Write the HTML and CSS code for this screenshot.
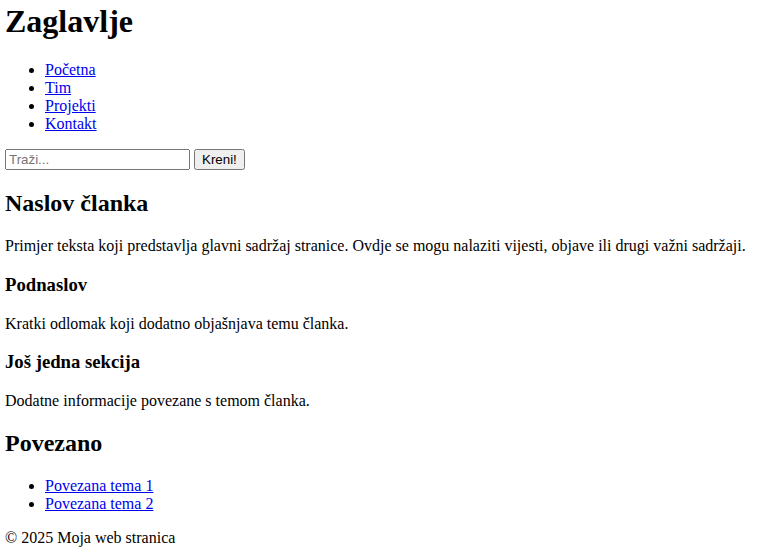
FILE: index.html
```html
<!DOCTYPE html>
<html lang="hr">
<head>
<meta charset="utf-8">
<title>Moja web stranica</title>
<link rel="stylesheet" href="styles.css">
</head>
<body>
<header class="site-header">
  <h1 class="site-title">Zaglavlje</h1>
  <nav class="site-nav">
    <ul>
      <li><a href="#">Početna</a></li>
      <li><a href="#">Tim</a></li>
      <li><a href="#">Projekti</a></li>
      <li><a href="#">Kontakt</a></li>
    </ul>
  </nav>
  <form class="search">
    <input type="text" placeholder="Traži..."> <button type="submit">Kreni!</button>
  </form>
</header>
<main>
  <article>
    <h2>Naslov članka</h2>
    <p>Primjer teksta koji predstavlja glavni sadržaj stranice. Ovdje se mogu nalaziti vijesti, objave ili drugi važni sadržaji.</p>
    <section>
      <h3>Podnaslov</h3>
      <p>Kratki odlomak koji dodatno objašnjava temu članka.</p>
    </section>
    <section>
      <h3>Još jedna sekcija</h3>
      <p>Dodatne informacije povezane s temom članka.</p>
    </section>
  </article>
  <aside>
    <h2>Povezano</h2>
    <ul>
      <li><a href="#">Povezana tema 1</a></li>
      <li><a href="#">Povezana tema 2</a></li>
    </ul>
  </aside>
</main>
<footer>
  <p>© 2025 Moja web stranica</p>
</footer>
</body>
</html>
```
FILE: styles.css
```css
body {
  margin: 0 5px;
  padding-top: 3px;
  font-family: "Liberation Serif", "Times New Roman", serif;
}
.site-title {
  margin-top: 0;
}
.search input,
.search button {
  font-family: "Liberation Sans", Arial, sans-serif;
}
```
